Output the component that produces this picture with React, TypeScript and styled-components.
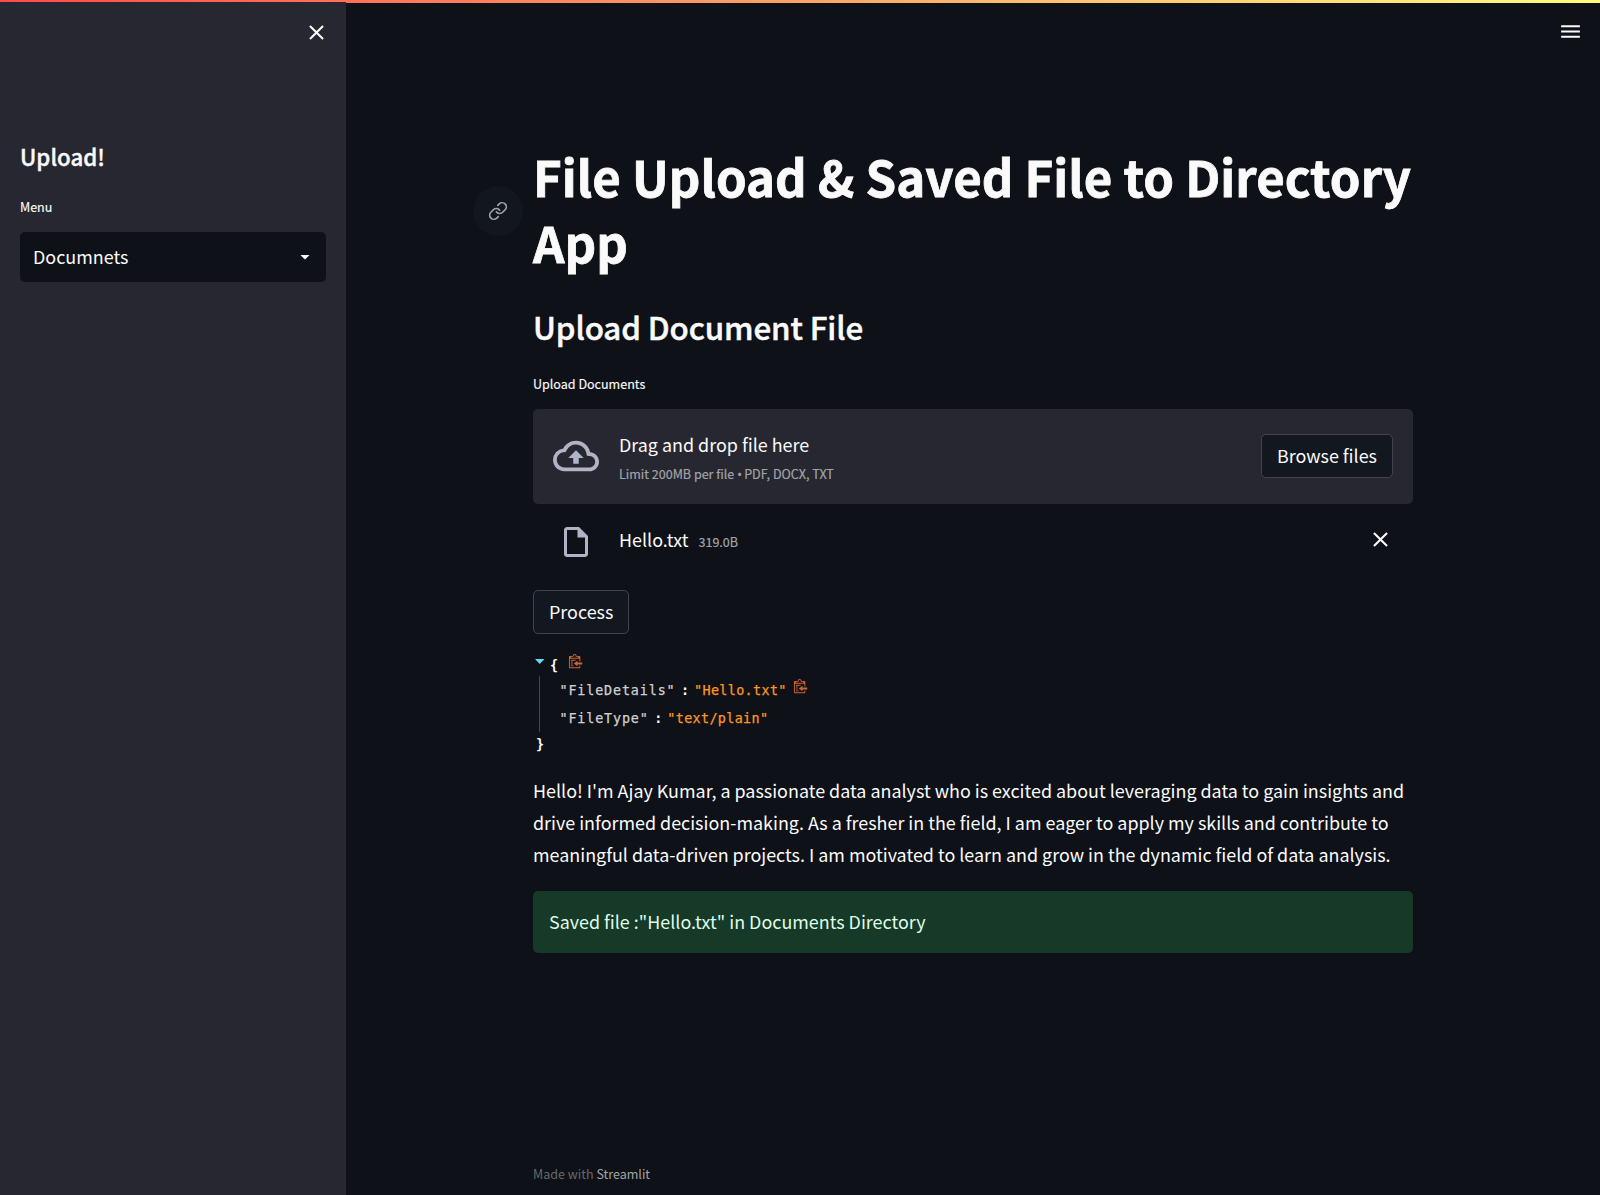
import React from "react";
import styled, { createGlobalStyle } from "styled-components";

const Global = createGlobalStyle`
  * { box-sizing: border-box; }
  html, body { margin: 0; padding: 0; background: #0e1117; }
  body {
    font-family: "Noto Sans CJK SC", "Noto Sans", sans-serif;
    font-size: 17.92px;
    line-height: 32px;
    color: #fafafa;
  }
`;

const Page = styled.div`
  position: relative;
  display: flex;
  height: 1195px;
  overflow: hidden;
`;

const Decoration = styled.div`
  position: absolute;
  inset: 0 0 auto 0;
  height: 3px;
  background: linear-gradient(90deg, #ff4b4b, #fffd80);
`;

const Sidebar = styled.aside`
  position: relative;
  width: 346px;
  flex: none;
  margin-top: 2px;
  padding: 18px 20px;
  background: #262730;
`;

const IconButton = styled.button`
  display: flex;
  padding: 0;
  border: 0;
  background: none;
  color: #fafafa;
`;

const SidebarTop = styled.div`
  display: flex;
  justify-content: flex-end;
  margin-right: -3px;
  height: 121px;
`;

const SidebarTitle = styled.h2`
  margin: 0;
  font-size: 22.3px;
  line-height: 30px;
  font-weight: 500;
  -webkit-text-stroke: 0.4px currentColor;
`;

const Label = styled.label<{ $top: number; $bottom: number }>`
  display: block;
  margin: ${(p) => p.$top}px 0 ${(p) => p.$bottom}px;
  font-size: 12.54px;
  line-height: 20px;
  -webkit-text-stroke: 0.15px currentColor;
`;

const Select = styled.div`
  display: flex;
  align-items: center;
  justify-content: space-between;
  height: 50px;
  padding: 0 11px 0 13px;
  border-radius: 5px;
  background: #0e1117;
`;

const SelectValue = styled.span`
  padding-bottom: 2px;
`;

const Main = styled.main`
  flex: 1;
  display: flex;
  flex-direction: column;
`;

const Toolbar = styled.header`
  display: flex;
  justify-content: flex-end;
  padding: 19px 17px 0 0;
  height: 143px;
`;

const Content = styled.div`
  width: 880px;
  margin: 0 auto;
  flex: 1;
  display: flex;
  flex-direction: column;
`;

const Title = styled.h1`
  position: relative;
  margin: 0;
  font-size: 49.15px;
  line-height: 66px;
  font-weight: 700;
  letter-spacing: 0.02px;
  -webkit-text-stroke: 0.8px currentColor;
`;

const Anchor = styled.a`
  position: absolute;
  left: -60px;
  top: 43px;
  width: 50px;
  height: 50px;
  border-radius: 50%;
  display: flex;
  align-items: center;
  justify-content: center;
  background: #12161d;
  color: #a3a4a7;
`;

const Subtitle = styled.h3`
  margin: 31px 0 0;
  font-size: 31.3px;
  line-height: 42px;
  font-weight: 500;
  letter-spacing: -0.11px;
  -webkit-text-stroke: 0.5px currentColor;
`;

const Dropzone = styled.section`
  display: flex;
  align-items: center;
  height: 95px;
  padding: 0 20px 1px;
  border-radius: 5px;
  background: #262730;
`;

const IconCell = styled.div<{ $drop?: number }>`
  width: 46px;
  margin-right: 20px;
  margin-top: ${(p) => p.$drop ?? 0}px;
  display: flex;
  justify-content: center;
  color: #b0b4c6;
`;

const DropText = styled.div`
  flex: 1;
  align-self: flex-start;
  padding-top: 19px;
  display: flex;
  flex-direction: column;
`;

const DropTitle = styled.span`
  line-height: 32px;
`;

const Small = styled.small`
  font-size: 12.54px;
  line-height: 27px;
  color: #a3a4a7;
  -webkit-text-stroke: 0.2px currentColor;
`;

const Bullet = styled.span`
  font-family: "Noto Sans", sans-serif;
  letter-spacing: -0.5px;
`;

const Button = styled.button`
  height: 44px;
  padding: 0 15px 2px;
  border: 1px solid #41444c;
  border-radius: 5px;
  background: #131720;
  color: #fafafa;
  font: inherit;
  line-height: 40px;
`;

const FileRow = styled.div`
  display: flex;
  align-items: center;
  height: 74px;
  padding: 0 20px 4px;
`;

const FileName = styled.div`
  flex: 1;
  display: flex;
  align-items: baseline;
  gap: 10px;
`;

const ProcessRow = styled.div`
  padding: 12px 0 18px;
  display: flex;
`;

const Json = styled.div`
  font-family: "DejaVu Sans Mono", monospace;
  font-size: 13.4px;
  letter-spacing: 0.36px;
  line-height: 30px;
  height: 122px;
`;

const JsonHead = styled.div`
  display: flex;
  height: 24px;
  line-height: 27px;
  font-weight: 700;
`;

const JsonBody = styled.div`
  margin-left: 6px;
  padding-left: 19.5px;
  border-left: 1px solid #49483e;
`;

const JsonRow = styled.div`
  display: flex;
  height: 28px;
`;

const JsonKey = styled.span`
  color: #cfd0d0;
  letter-spacing: 0.86px;
  -webkit-text-stroke: 0.25px currentColor;
`;

const JsonColon = styled.b`
  margin: 0 4.7px 0 5.5px;
`;

const JsonValue = styled.span`
  color: #fd971f;
  -webkit-text-stroke: 0.25px currentColor;
`;

const JsonClose = styled.div`
  margin-left: 3px;
  font-weight: 700;
  line-height: 26px;
`;

const Paragraph = styled.p`
  margin: 0;
  white-space: nowrap;
`;

const Alert = styled.div`
  margin-top: 21px;
  height: 62px;
  padding: 14px 16px;
  border-radius: 5px;
  background: #173928;
  color: #dffde9;
`;

const Footer = styled.footer`
  margin-top: auto;
  height: 32px;
  font-size: 12.54px;
  line-height: 22px;
  color: #67696e;
`;

const FooterLink = styled.a`
  color: #a3a4a7;
`;

const Close = () => (
  <svg width="25" height="25" viewBox="0 0 24 24" fill="currentColor">
    <path d="M19 6.41L17.59 5 12 10.59 6.41 5 5 6.41 10.59 12 5 17.59 6.41 19 12 13.41 17.59 19 19 17.59 13.41 12z" />
  </svg>
);

const Clipboard = styled.svg<{ $gap: number; $drop: number }>`
  margin: ${(p) => p.$drop}px 0 0 ${(p) => p.$gap}px;
  fill: #cc6633;
`;

const CopyIcon = ({ gap, drop }: { gap: number; drop: number }) => (
  <Clipboard $gap={gap} $drop={drop} width="15.2" height="15.2" viewBox="0 0 40 40">
    <path d="m30 35h-25v-22.5h25v7.5h2.5v-12.5c0-1.4-1.1-2.5-2.5-2.5h-7.5c0-2.8-2.2-5-5-5s-5 2.2-5 5h-7.5c-1.4 0-2.5 1.1-2.5 2.5v27.5c0 1.4 1.1 2.5 2.5 2.5h25c1.4 0 2.5-1.1 2.5-2.5v-5h-2.5v5z m-20-27.5h2.5s2.5-1.1 2.5-2.5 1.1-2.5 2.5-2.5 2.5 1.1 2.5 2.5 1.3 2.5 2.5 2.5h2.5s2.5 1.1 2.5 2.5h-20c0-1.5 1.1-2.5 2.5-2.5z m-2.5 20h5v-2.5h-5v2.5z m17.5-5v-5l-10 7.5 10 7.5v-5h12.5v-5h-12.5z m-17.5 10h7.5v-2.5h-7.5v2.5z m12.5-17.5h-12.5v2.5h12.5v-2.5z m-7.5 5h-5v2.5h5v-2.5z" />
  </Clipboard>
);

export default function App() {
  return (
    <>
      <Global />
      <Page>
        <Decoration />
        <Sidebar>
          <SidebarTop>
            <IconButton aria-label="Close sidebar">
              <Close />
            </IconButton>
          </SidebarTop>
          <SidebarTitle>Upload!</SidebarTitle>
          <Label $top={26} $bottom={15}>Menu</Label>
          <Select>
            <SelectValue>Documnets</SelectValue>
            <svg width="20" height="20" viewBox="0 0 24 24" fill="currentColor">
              <path d="M6.5 9.5h11L12 15z" />
            </svg>
          </Select>
        </Sidebar>
        <Main>
          <Toolbar>
            <IconButton aria-label="Menu">
              <svg width="25" height="25" viewBox="0 0 24 24" fill="currentColor">
                <path d="M3 18h18v-2H3v2zm0-5h18v-2H3v2zm0-7v2h18V6H3z" />
              </svg>
            </IconButton>
          </Toolbar>
          <Content>
            <Title>
              <Anchor>
                <svg width="20" height="20" viewBox="0 0 24 24" fill="none" stroke="currentColor" strokeWidth="2" strokeLinecap="round" strokeLinejoin="round">
                  <path d="M10 13a5 5 0 0 0 7.54.54l3-3a5 5 0 0 0-7.07-7.07l-1.72 1.71" />
                  <path d="M14 11a5 5 0 0 0-7.54-.54l-3 3a5 5 0 0 0 7.07 7.07l1.71-1.71" />
                </svg>
              </Anchor>
              File Upload &amp; Saved File to Directory App
            </Title>
            <Subtitle>Upload Document File</Subtitle>
            <Label $top={26} $bottom={15}>Upload Documents</Label>
            <Dropzone>
              <IconCell>
                <svg width="46" height="46" viewBox="0 0 24 24" fill="currentColor">
                  <path d="M19.35 10.04A7.49 7.49 0 0 0 12 4C9.11 4 6.6 5.64 5.35 8.04A5.994 5.994 0 0 0 0 14c0 3.31 2.69 6 6 6h13c2.76 0 5-2.24 5-5 0-2.64-2.05-4.78-4.65-4.96zM19 18H6c-2.21 0-4-1.79-4-4 0-2.05 1.53-3.76 3.56-3.97l1.07-.11.5-.95A5.469 5.469 0 0 1 12 6c2.62 0 4.88 1.86 5.39 4.43l.3 1.5 1.53.11A2.98 2.98 0 0 1 22 15c0 1.65-1.35 3-3 3zM8 13h2.55v3h2.9v-3H16l-4-4z" />
                </svg>
              </IconCell>
              <DropText>
                <DropTitle>Drag and drop file here</DropTitle>
                <Small>
                  Limit 200MB per file <Bullet>•</Bullet> PDF, DOCX, TXT
                </Small>
              </DropText>
              <Button>Browse files</Button>
            </Dropzone>
            <FileRow>
              <IconCell $drop={6}>
                <svg width="36" height="36" viewBox="0 0 24 24" fill="currentColor">
                  <path d="M14 2H6c-1.1 0-1.99.9-1.99 2L4 20c0 1.1.89 2 1.99 2H18c1.1 0 2-.9 2-2V8l-6-6zM6 20V4h7v5h5v11H6z" />
                </svg>
              </IconCell>
              <FileName>
                <span>Hello.txt</span>
                <Small>319.0B</Small>
              </FileName>
              <IconButton aria-label="Remove file">
                <Close />
              </IconButton>
            </FileRow>
            <ProcessRow>
              <Button>Process</Button>
            </ProcessRow>
            <Json>
              <JsonHead>
                <svg width="17" height="20" viewBox="0 0 17 20" fill="#66d9ef">
                  <path d="M2 7h9.5l-4.75 5z" />
                </svg>
                <span>{"{"}</span>
                <CopyIcon gap={9.5} drop={1.6} />
              </JsonHead>
              <JsonBody>
                <JsonRow>
                  <JsonKey>"FileDetails"</JsonKey>
                  <JsonColon>:</JsonColon>
                  <JsonValue>"Hello.txt"</JsonValue>
                  <CopyIcon gap={6} drop={3} />
                </JsonRow>
                <JsonRow>
                  <JsonKey>"FileType"</JsonKey>
                  <JsonColon>:</JsonColon>
                  <JsonValue>"text/plain"</JsonValue>
                </JsonRow>
              </JsonBody>
              <JsonClose>{"}"}</JsonClose>
            </Json>
            <Paragraph>
              Hello! I'm Ajay Kumar, a passionate data analyst who is excited about leveraging data to gain insights and
              <br />
              drive informed decision-making. As a fresher in the field, I am eager to apply my skills and contribute to
              <br />
              meaningful data-driven projects. I am motivated to learn and grow in the dynamic field of data analysis.
            </Paragraph>
            <Alert>Saved file :"Hello.txt" in Documents Directory</Alert>
            <Footer>
              Made with <FooterLink>Streamlit</FooterLink>
            </Footer>
          </Content>
        </Main>
      </Page>
    </>
  );
}
